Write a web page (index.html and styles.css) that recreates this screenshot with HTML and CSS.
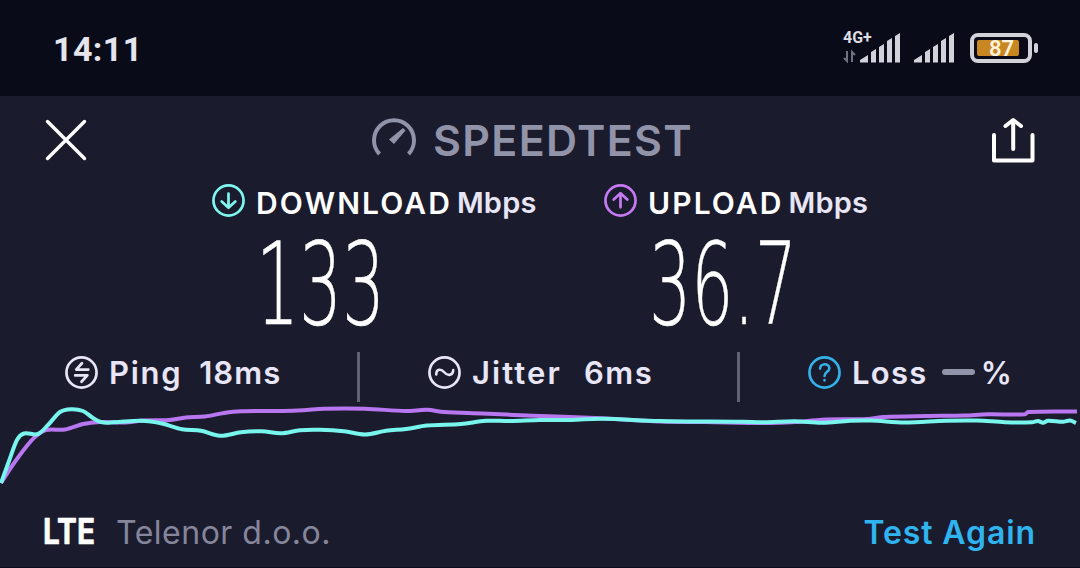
FILE: index.html
```
<!DOCTYPE html>
<html lang="en">
<head>
    <meta charset="UTF-8">
    <meta name="viewport" content="width=device-width, initial-scale=1.0">
    <title>Speedtest</title>
    <link rel="stylesheet" href="styles.css">
</head>
<body>
    <div class="status-bar">
        <div class="clock">14:11</div>
        <div class="status-icons">
            <div class="network">
                <span class="network-type">4G+</span>
                <svg class="data-arrows" width="14" height="13" viewBox="0 0 14 13">
                    <path d="M4 1V11L1 8M9 12V2L12 5" />
                </svg>
            </div>
            <svg class="signal" width="41" height="30" viewBox="0 0 41 30">
                <path d="M0 29.500V27L8 22V29.500ZM11 29.500V19L16 16V29.500ZM19 29.500V14L24 11V29.500ZM27 29.500V8L32 5V29.500ZM35 29.500V3L40 0V29.500Z" />
            </svg>
            <svg class="signal second" width="41" height="30" viewBox="0 0 41 30">
                <path d="M0 29.500V27L8 22V29.500ZM11 29.500V19L16 16V29.500ZM19 29.500V14L24 11V29.500ZM27 29.500V8L32 5V29.500ZM35 29.500V3L40 0V29.500Z" />
            </svg>
            <div class="battery">
                <div class="battery-level">87</div>
            </div>
            <div class="battery-tip"></div>
        </div>
    </div>

    <div class="app">
        <div class="header">
            <svg class="close" width="44" height="44" viewBox="0 0 44 44">
                <path d="M3.500 3.500L40.500 40.500M40.500 3.500L3.500 40.500" />
            </svg>
            <div class="brand">
                <svg class="gauge" width="46" height="40" viewBox="0 0 46 40">
                    <path class="gauge-ring" d="M8.500 36A20 20 0 1 1 37.500 36" />
                    <path class="gauge-needle" d="M32 10L34.500 12.500L23 26L18 21.500Z" />
                </svg>
                <span class="brand-name">SPEEDTEST</span>
            </div>
            <svg class="share" width="44" height="46" viewBox="0 0 44 46">
                <path d="M2 17V42.500H40.500V17M21.200 31V3M13.500 8L21.200 2L29 8" />
            </svg>
        </div>

        <div class="results">
            <div class="result">
                <div class="result-label">
                    <svg class="icon download" viewBox="0 0 34 34">
                        <circle cx="17" cy="17" r="15.500" />
                        <path d="M17 10V24M10 18L17 24.500L24 18" />
                    </svg>
                    <span class="result-name">DOWNLOAD</span>
                    <span class="unit">Mbps</span>
                </div>
                <svg class="value" width="180" height="120">
                    <text x="1" y="92" textLength="129" lengthAdjust="spacingAndGlyphs">133</text>
                </svg>
            </div>
            <div class="result">
                <div class="result-label">
                    <svg class="icon upload" viewBox="0 0 34 34">
                        <circle cx="17" cy="17" r="15.500" />
                        <path d="M17 24V10M10 16L17 9.500L24 16" />
                    </svg>
                    <span class="result-name">UPLOAD</span>
                    <span class="unit">Mbps</span>
                </div>
                <svg class="value" width="180" height="120">
                    <text x="2" y="92" textLength="148" lengthAdjust="spacingAndGlyphs">36.7</text>
                </svg>
            </div>
        </div>

        <div class="metrics">
            <div class="metric ping">
                <svg class="icon" viewBox="0 0 34 34">
                    <circle cx="17" cy="17" r="15.500" />
                    <path d="M24 14H11.500L17.500 7.500M10.500 20H23L17 26.500" />
                </svg>
                <span class="metric-name">Ping</span>
                <span class="metric-value">18ms</span>
            </div>
            <div class="metric jitter">
                <svg class="icon" viewBox="0 0 34 34">
                    <circle cx="17" cy="17" r="15.500" />
                    <path class="thin" d="M8.500 19C8.500 13 13.500 13 17 17S26 20 26 14.500" />
                </svg>
                <span class="metric-name">Jitter</span>
                <span class="metric-value">6ms</span>
            </div>
            <div class="metric loss">
                <svg class="icon help" viewBox="0 0 34 34">
                    <circle cx="17" cy="17" r="15.500" />
                    <path class="thin" d="M12.500 13C12.500 7 22 7 22 12.500C22 16 17 16.500 17 20.500M17 24.800V25.200" />
                </svg>
                <span class="metric-name">Loss</span>
                <span class="dash"></span>
                <span class="percent">%</span>
            </div>
        </div>

        <svg class="chart" width="1080" height="96" viewBox="0 402 1080 96">
            <path id="uploadLine" class="line-upload" />
            <path id="downloadLine" class="line-download" />
        </svg>

        <div class="footer">
            <svg class="lte" width="54" height="40">
                <text x="0" y="27" textLength="52" lengthAdjust="spacingAndGlyphs">LTE</text>
            </svg>
            <span class="carrier">Telenor d.o.o.</span>
            <span class="test-again">Test Again</span>
        </div>
    </div>

<script>
const upload = [
    [1, 483], [12, 466], [26, 447], [36, 436], [46, 430], [65, 429.500], [83, 424], [100, 422],
    [124, 422.500], [144, 420.500], [169, 420], [186, 417.500], [205, 416.500], [224, 413],
    [241, 411.300], [282, 411], [303, 410.300], [324, 408.800], [365, 408.800], [406, 411],
    [427, 409.800], [444, 412], [482, 413.500], [540, 416], [595, 418], [660, 421.500],
    [705, 422], [764, 423], [795, 422], [822, 419.700], [867, 419], [884, 417], [926, 416],
    [964, 415.500], [988, 414.300], [1025, 414.300], [1028, 412], [1077, 411.500]
];
const download = [
    [1, 483], [9, 461], [17, 440], [24, 433.500], [38, 434], [48, 425], [60, 412], [71, 409.200],
    [83, 411], [93, 418], [102, 422.300], [114, 422.300], [141, 420.800], [162, 423.500],
    [182, 429.300], [201, 430.800], [220, 435.800], [241, 432.300], [262, 431.300], [281, 433.300],
    [300, 430.200], [320, 429.800], [344, 431.300], [365, 434.500], [386, 430.800], [406, 429],
    [427, 425.600], [461, 424], [486, 420.800], [510, 421], [540, 420], [571, 420], [602, 418.700],
    [660, 421], [743, 421.800], [764, 422.300], [795, 421.300], [822, 422.800], [850, 420.700],
    [871, 420.500], [905, 422.500], [946, 420.700], [977, 420.500], [1005, 422.200],
    [1032, 422.200], [1038, 421], [1043, 422.700], [1048, 420.700], [1063, 421.800],
    [1070, 420.500], [1076, 423]
];

// Smooth curve through all the samples
function linePath(points) {
    let d = `M${points[0]}`;
    for (let i = 0; i < points.length - 1; i++) {
        const p0 = points[i - 1] || points[i];
        const p1 = points[i];
        const p2 = points[i + 1];
        const p3 = points[i + 2] || p2;
        const t = (p2[0] - p1[0]) / 3;
        const s1 = (p2[1] - p0[1]) / (p2[0] - p0[0]);
        const s2 = (p3[1] - p1[1]) / (p3[0] - p1[0]);
        d += `C${p1[0] + t},${p1[1] + s1 * t} ${p2[0] - t},${p2[1] - s2 * t} ${p2}`;
    }
    return d;
}

document.getElementById('uploadLine').setAttribute('d', linePath(upload));
document.getElementById('downloadLine').setAttribute('d', linePath(download));
</script>

</body>
</html>
```
FILE: styles.css
```
* {
    box-sizing: border-box;
}

body {
    margin: 0;
    width: 1080px;
    height: 568px;
    overflow: hidden;
    background: #1b1b2e;
    color: #e8e6f6;
    font-family: Inter, "Liberation Sans", sans-serif;
    font-weight: 600;
    line-height: 1;
    white-space: nowrap;
}

svg {
    display: block;
    flex: none;
    overflow: visible;
}

.status-bar {
    display: flex;
    justify-content: space-between;
    height: 96px;
    padding: 32px 42px 0 53px;
    background: #090b18;
}

.clock {
    font-family: Roboto, sans-serif;
    font-size: 34px;
    font-weight: 700;
    letter-spacing: 0.4px;
    color: #e6e5ee;
}

.status-icons {
    display: flex;
    align-items: flex-start;
}

.network {
    width: 17px;
    margin-top: -2px;
    font-family: Roboto, sans-serif;
}

.network-type {
    display: block;
    font-size: 16px;
    font-weight: 700;
    color: #dcdce4;
}

.data-arrows {
    margin-top: 4px;
    fill: none;
    stroke: #71727f;
    stroke-width: 2;
}

.signal {
    margin-top: 1px;
    fill: #d2d2da;
}

.second {
    margin-left: 13px;
}

.battery {
    width: 62px;
    height: 30px;
    margin: 1px 2px 0 15px;
    padding: 3px;
    border: 4px solid #d2d2da;
    border-radius: 8px;
}

.battery-level {
    width: 42px;
    height: 16px;
    border-radius: 2px;
    background: #c98721;
    color: #fdf3dc;
    font-family: Roboto, sans-serif;
    font-size: 22px;
    font-weight: 600;
    line-height: 18px;
    text-indent: 12px;
}

.battery-tip {
    width: 4px;
    height: 10px;
    margin-top: 11px;
    border-radius: 2px;
    background: #d2d2da;
}

.app {
    height: 472px;
    border-bottom: 1px solid #0c0c1a;
}

.header {
    display: flex;
    height: 88px;
    padding: 22px 44px 0;
}

.close,
.share {
    fill: none;
    stroke: #ffffff;
    stroke-width: 3.4;
    stroke-linecap: round;
}

.share {
    margin-left: auto;
    stroke-width: 4;
    stroke-linejoin: round;
}

.brand {
    display: flex;
    margin-left: 283px;
    color: #9193a9;
}

.gauge-ring {
    fill: none;
    stroke: #9193a9;
    stroke-width: 4;
}

.gauge-needle {
    fill: #9193a9;
}

.brand-name {
    margin: 1px 0 0 16px;
    font-size: 43px;
    letter-spacing: 1.3px;
}

.results {
    display: grid;
    grid-template-columns: 392px 392px;
    height: 168px;
    padding-left: 212px;
}

.result-label {
    display: flex;
    height: 48px;
}

.icon {
    width: 33px;
    height: 33px;
    fill: none;
    stroke: #e8e6f6;
    stroke-width: 2.8;
    stroke-linecap: round;
    stroke-linejoin: round;
}

.icon .thin {
    stroke-width: 2.6;
}

.download {
    stroke: #7ef6ee;
}

.upload {
    stroke: #c57af2;
}

.help {
    stroke: #34b1e8;
}

.result-name {
    padding: 4px 0 0 11px;
    font-size: 30px;
    color: #ffffff;
    letter-spacing: 2.1px;
}

.unit {
    padding: 4px 0 0 5px;
    font-size: 29px;
    letter-spacing: 0.2px;
}

.value {
    margin-left: 43px;
    font-family: "DejaVu Sans", sans-serif;
    font-size: 114px;
    font-weight: 200;
    fill: #ffffff;
    stroke: #ffffff;
    stroke-width: 0.5;
}

.metrics {
    display: grid;
    grid-template-columns: 360px 380px 340px;
    height: 50px;
}

.metric {
    display: flex;
    padding-top: 4px;
    font-size: 31px;
}

.ping,
.jitter {
    border-right: 3px solid #626275;
}

.ping {
    padding-left: 65px;
}

.jitter {
    padding-left: 68px;
}

.loss {
    padding-left: 68px;
}

.metric-name {
    padding: 1px 0 0 11px;
    letter-spacing: 1.7px;
}

.jitter .metric-name {
    letter-spacing: 2.1px;
}

.loss .metric-name {
    letter-spacing: 1.3px;
}

.metric-value {
    padding: 1px 0 0 17px;
    letter-spacing: 1px;
}

.jitter .metric-value {
    padding-left: 22px;
    letter-spacing: 1.5px;
}

.dash {
    width: 33px;
    height: 6px;
    margin: 13px 7px 0 14px;
    border-radius: 3px;
    background: #9193a9;
}

.percent {
    padding-top: 1px;
    margin-left: -1px;
}

.chart path {
    fill: none;
    stroke-width: 4;
    stroke-linejoin: round;
}

.chart .line-upload {
    stroke: #b877f0;
}

.chart .line-download {
    stroke: #78f6ee;
}

.footer {
    display: flex;
    padding: 19px 44px 0 43px;
    font-size: 32px;
}

.lte {
    font-size: 35px;
    font-weight: 700;
    fill: #ffffff;
    stroke: #ffffff;
    stroke-width: 0.6;
    stroke-linejoin: round;
}

.carrier {
    margin-left: 19px;
    font-weight: 400;
    letter-spacing: 0.5px;
    color: #85869b;
}

.test-again {
    margin-left: auto;
    letter-spacing: 0.9px;
    color: #2fb4f0;
}
```
